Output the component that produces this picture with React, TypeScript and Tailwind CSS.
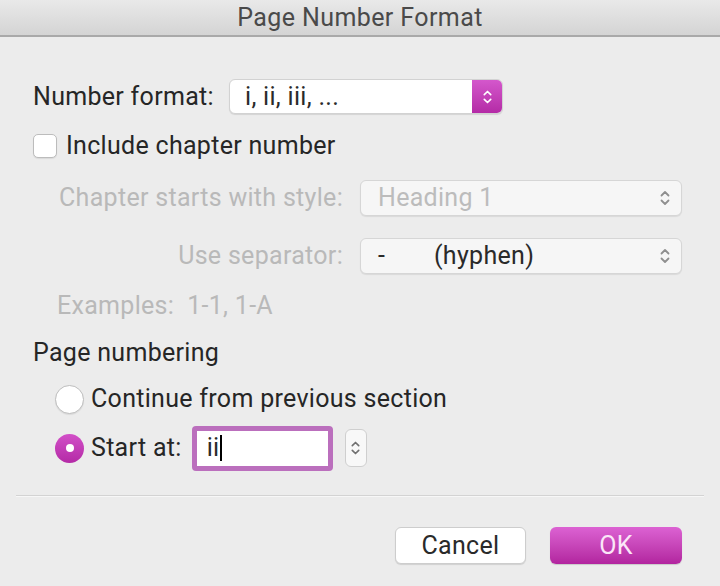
import React from 'react';

const font = { fontFamily: 'Roboto, "Noto Sans", sans-serif' };

const Chevrons: React.FC<{ className?: string }> = ({ className = '' }) => (
  <svg viewBox="0 0 12 20" className={className} fill="none" stroke="currentColor" strokeWidth="1.8" strokeLinecap="round" strokeLinejoin="round">
    <path d="M2.5 7.5 L6 4 L9.5 7.5" />
    <path d="M2.5 12.5 L6 16 L9.5 12.5" />
  </svg>
);

interface SelectProps {
  value: React.ReactNode;
  muted?: boolean;
  width: string;
}

const GraySelect: React.FC<SelectProps> = ({ value, muted, width }) => (
  <div className={`${width} h-[36px] flex items-center justify-between rounded-[6px] border border-[#d6d6d6] bg-[#f6f6f6] shadow-[0_1px_1px_rgba(0,0,0,0.08)] pl-[17px] pr-[10px]`}>
    <span className={`${muted ? 'text-[#bcbcbc]' : 'text-[#2a2a2a]'}`}>{value}</span>
    <Chevrons className="w-[12px] h-[22px] text-[#8f8f8f]" />
  </div>
);

export default function App() {
  return (
    <div style={font} className="w-[720px] h-[586px] bg-[#ececec] flex flex-col text-[#262626] text-[25px] leading-[30px] tracking-[0.3px] overflow-hidden">
      {/* title bar */}
      <div className="h-[37px] shrink-0 flex items-center justify-center bg-gradient-to-b from-[#e9e9e9] to-[#d4d4d4] border-b-[2px] border-[#a9a9a9]">
        <span className="text-[25px] text-[#4a4a4a] tracking-[0.4px]">Page Number Format</span>
      </div>

      <div className="flex flex-col pl-[33px] pr-[39px]">
        {/* number format */}
        <div className="flex items-center mt-[42px] h-[35px]">
          <span className="w-[196px]">Number format:</span>
          <div className="w-[274px] h-[35px] flex rounded-[6px] border border-[#d2d2d2] bg-white shadow-[0_1px_1px_rgba(0,0,0,0.1)] overflow-hidden">
            <span className="flex-1 flex items-center pl-[15px] text-[#2a2a2a]">i, ii, iii, ...</span>
            <div className="w-[30px] flex items-center justify-center bg-gradient-to-b from-[#d457cc] to-[#b42aa6]">
              <Chevrons className="w-[11px] h-[20px] text-white" />
            </div>
          </div>
        </div>

        {/* include chapter number */}
        <div className="flex items-center mt-[20px] h-[24px]">
          <div className="w-[24px] h-[24px] rounded-[5px] border border-[#bcbcbc] bg-white shadow-[0_1px_1px_rgba(0,0,0,0.08)]" />
          <span className="ml-[9px]">Include chapter number</span>
        </div>

        {/* chapter options */}
        <div className="grid grid-cols-[286px_322px] gap-x-[17px] gap-y-[22px] items-center mt-[22px] ml-[24px]">
          <span className="text-[#b9b9b9] text-right">Chapter starts with style:</span>
          <GraySelect value="Heading 1" muted width="w-[322px]" />
          <span className="text-[#b9b9b9] text-right">Use separator:</span>
          <GraySelect
            value={
              <>
                <span className="inline-block w-[56px]">-</span>(hyphen)
              </>
            }
            width="w-[322px]"
          />
        </div>

        <div className="mt-[17px] ml-[24px] h-[30px] text-[#b9b9b9]">
          Examples:&nbsp; 1-1, 1-A
        </div>

        <div className="mt-[17px] h-[30px]">Page numbering</div>

        {/* radios */}
        <div className="flex items-center mt-[16px] ml-[22px] h-[30px]">
          <div className="w-[29px] h-[29px] rounded-full border border-[#bdbdbd] bg-white shadow-[0_1px_1px_rgba(0,0,0,0.08)]" />
          <span className="ml-[7px]">Continue from previous section</span>
        </div>

        <div className="flex items-center mt-[11px] ml-[22px] h-[46px]">
          <div className="w-[29px] h-[29px] rounded-full bg-gradient-to-b from-[#d24fc8] to-[#b42aa6] flex items-center justify-center">
            <div className="w-[8px] h-[8px] rounded-full bg-white" />
          </div>
          <span className="ml-[7px]">Start at:</span>
          <div className="ml-[10px] w-[141px] h-[45px] rounded-[4px] bg-[#bb6fbd] p-[5px]">
            <div className="w-full h-full bg-white flex items-center pl-[10px] text-[#2a2a2a]">
              ii<span className="inline-block w-[2px] h-[26px] bg-black ml-[1px]" />
            </div>
          </div>
          <div className="ml-[12px] w-[22px] h-[38px] rounded-[6px] border border-[#cfcfcf] bg-[#f8f8f8] flex items-center justify-center">
            <Chevrons className="w-[11px] h-[22px] text-[#707070]" />
          </div>
        </div>
      </div>

      {/* separator */}
      <div className="mt-[24px] mx-[16px] h-[2px] bg-[#d3d3d3] border-b border-[#f7f7f7]" />

      {/* buttons */}
      <div className="flex justify-end gap-[24px] mt-[30px] pr-[38px]">
        <button className="w-[131px] h-[37px] rounded-[6px] border border-[#cdcdcd] bg-white shadow-[0_1px_1px_rgba(0,0,0,0.12)] text-[#2a2a2a]">
          Cancel
        </button>
        <button className="w-[132px] h-[37px] rounded-[6px] bg-gradient-to-b from-[#dc62d3] to-[#b2249f] shadow-[0_1px_1px_rgba(0,0,0,0.15)] text-[#fbe6f8]">
          OK
        </button>
      </div>
    </div>
  );
}
